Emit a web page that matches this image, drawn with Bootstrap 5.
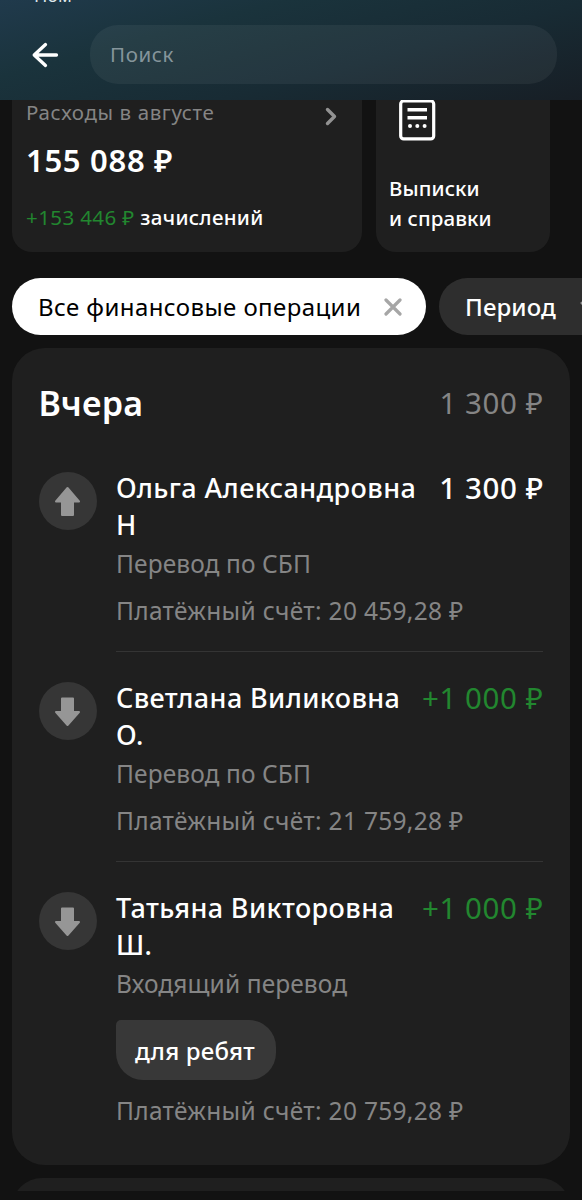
<!DOCTYPE html>
<html lang="ru" data-bs-theme="dark">
<head>
<meta charset="utf-8">
<meta name="viewport" content="width=device-width, initial-scale=1">
<title>История операций</title>
<link href="https://cdn.jsdelivr.net/npm/bootstrap@5.3.0/dist/css/bootstrap.min.css" rel="stylesheet">
<style>
  body { background: #121212; color: #fff; font-family: "Noto Sans", "Open Sans", sans-serif; height: 1200px; overflow: hidden; white-space: nowrap; }
  .screen { height: 1200px; overflow: hidden; }
  .inset { margin-left: 12px; }
  .topbar { height: 100px; padding: 25px 25px 0 31px; background: linear-gradient(165deg, #203a4c 0%, #1a333c 30%, #182b34 62%, #171e25 100%); position: relative; }
  .status-clip { position: absolute; left: 34px; top: -17px; font-size: 18px; line-height: 24px; color: #dfe6ea; }
  .search { height: 59px; border-radius: 28px; background: rgba(255,255,255,.055); color: #85959b; padding: 0 20px; font-size: 20.5px; line-height: 58px; margin-left: 31px; letter-spacing: .6px; }
  .panel { background: #1f1f1f; }
  .summary { height: 152px; border-radius: 0 0 20px 20px; }
  .spend { width: 350px; padding-left: 14px; }
  .docs { width: 174px; padding-left: 13px; margin-left: 14px; }
  .docs-icon { margin-left: 10px; }
  .docs-label { margin-top: 32px; letter-spacing: .1px; }
  .muted { color: #858585; }
  .gain { color: #22872f; }
  .cap-sm { font-size: 20.5px; line-height: 30px; font-weight: 500; }
  .spend-title { height: 30px; margin-top: -3px; font-weight: 400; letter-spacing: .6px; }
  .total { font-size: 31px; font-weight: 600; line-height: 40px; margin-top: 13px; letter-spacing: .7px; }
  .income { margin-top: 22px; letter-spacing: .3px; }
  .income .gain { font-weight: 400; letter-spacing: .4px; }
  .filters { margin-top: 26px; height: 57px; }
  .chip { height: 57px; border-radius: 29px; font-size: 24px; line-height: 57px; padding-left: 26px; }
  .chip-on { background: #fff; color: #000; width: 414px; padding-right: 24px; letter-spacing: .42px; }
  .chip-off { background: #2e2e2e; width: 143px; margin-left: 13px; border-radius: 29px 0 0 29px; font-weight: 500; letter-spacing: .1px; overflow: hidden; }
  .feed { margin-top: 13px; height: 817px; border-radius: 33px; width: 558px; padding: 0 27px 0 26.5px; }
  .day { height: 94px; padding-top: 31px; line-height: 48px; }
  .day-name { font-size: 34px; font-weight: 600; letter-spacing: .3px; }
  .sum { font-size: 29.5px; letter-spacing: .6px; margin-right: -.6px; }
  .op { height: 210px; padding-top: 27px; }
  .op-icon { width: 58px; height: 58px; border-radius: 50%; background: #363636; margin: 3px 19.5px 0 0; }
  .op-body { height: 183px; width: 427px; }
  .op-line { border-bottom: 1px solid #343434; }
  .who { font-size: 27px; line-height: 37px; font-weight: 500; letter-spacing: .4px; }
  .op .sum { line-height: 38px; }
  .sum-out { font-weight: 500; }
  .info { font-size: 24.5px; line-height: 32px; margin-top: 5px; letter-spacing: .1px; }
  .acct { font-size: 24.5px; line-height: 32px; margin-top: 15px; letter-spacing: .3px; }
  .bubble { margin-top: 20px; height: 60px; width: 160px; border-radius: 5px 27px 27px 27px; background: #383838; font-size: 24px; line-height: 61px; padding-left: 19px; font-weight: 500; letter-spacing: .2px; }
  .next { margin-top: 13px; height: 13px; width: 558px; overflow: hidden; }
  .next > div { height: 60px; border-radius: 33px; }
</style>
</head>
<body>
<div class="screen d-flex flex-column">
  <header class="topbar d-flex align-items-start flex-shrink-0">
    <div class="status-clip">Ном</div>
    <svg class="flex-shrink-0" width="28" height="59" viewBox="0 0 28 59" fill="none" stroke="#fff" stroke-width="3.3" stroke-linecap="round" stroke-linejoin="round"><path d="M14.500 19.500 3.200 30 14.500 40.500M3.200 30H25.500"/></svg>
    <div class="search flex-grow-1">Поиск</div>
  </header>

  <section class="d-flex flex-shrink-0 inset">
    <div class="summary panel spend">
      <div class="d-flex justify-content-between cap-sm spend-title muted">
        <span>Расходы в августе</span>
        <svg class="me-4" width="14" height="38" viewBox="0 0 14 38" fill="none" stroke="#929292" stroke-width="3.4" stroke-linecap="round" stroke-linejoin="round"><path d="M3.500 12.500 10.500 19.500 3.500 26.500"/></svg>
      </div>
      <div class="total">155 088 ₽</div>
      <div class="cap-sm income"><span class="gain">+153 446 ₽</span> зачислений</div>
    </div>
    <div class="summary panel docs">
      <svg class="d-block docs-icon" width="38" height="41" viewBox="0 0 38 41" fill="none" stroke="#fff"><rect x="1.700" y=".9" width="33" height="38" rx="3" stroke-width="3.200"/><path d="M8.500 9.700h19.500M8.500 17.700h19.500" stroke-width="3.400"/><g fill="#fff" stroke="none"><circle cx="11" cy="26" r="2"/><circle cx="18.300" cy="26" r="2"/><circle cx="25.600" cy="26" r="2"/></g></svg>
      <div class="cap-sm docs-label">Выписки<br>и справки</div>
    </div>
  </section>

  <section class="filters d-flex flex-shrink-0 inset">
    <div class="chip chip-on d-flex align-items-center flex-shrink-0">
      <span>Все финансовые операции</span>
      <svg class="ms-auto" width="18" height="18" viewBox="0 0 18 18" stroke="#a6a6a6" stroke-width="3.2" stroke-linecap="round"><path d="M2 2 16 16M16 2 2 16"/></svg>
    </div>
    <div class="chip chip-off d-flex align-items-center flex-shrink-0">
      <span>Период</span>
      <svg class="flex-shrink-0 ms-4" width="18" height="12" viewBox="0 0 18 12" fill="none" stroke="#929292" stroke-width="3" stroke-linecap="round" stroke-linejoin="round"><path d="M2 2 9 9 16 2"/></svg>
    </div>
  </section>

  <main class="feed panel flex-shrink-0 inset">
    <div class="day d-flex justify-content-between">
      <span class="day-name">Вчера</span><span class="sum muted">1 300 ₽</span>
    </div>
    <div class="op d-flex">
      <div class="op-icon d-flex align-items-center justify-content-center flex-shrink-0">
        <svg width="27" height="31" viewBox="0 0 27 31" fill="#969696" stroke="#969696" stroke-width="2" stroke-linejoin="round"><path d="M13.500 2 25 15.500H19V29H8V15.500H2Z"/></svg>
      </div>
      <div class="op-body op-line">
        <div class="d-flex justify-content-between"><div class="who">Ольга Александровна<br>Н</div><div class="sum sum-out">1 300 ₽</div></div>
        <div class="info muted">Перевод по СБП</div>
        <div class="acct muted">Платёжный счёт: 20 459,28 ₽</div>
      </div>
    </div>
    <div class="op d-flex">
      <div class="op-icon d-flex align-items-center justify-content-center flex-shrink-0">
        <svg width="27" height="31" viewBox="0 0 27 31" fill="#969696" stroke="#969696" stroke-width="2" stroke-linejoin="round"><path d="M13.500 29 25 16H19V2.500H8V16H2Z"/></svg>
      </div>
      <div class="op-body op-line">
        <div class="d-flex justify-content-between"><div class="who">Светлана Виликовна<br>О.</div><div class="sum gain">+1 000 ₽</div></div>
        <div class="info muted">Перевод по СБП</div>
        <div class="acct muted">Платёжный счёт: 21 759,28 ₽</div>
      </div>
    </div>
    <div class="op d-flex">
      <div class="op-icon d-flex align-items-center justify-content-center flex-shrink-0">
        <svg width="27" height="31" viewBox="0 0 27 31" fill="#969696" stroke="#969696" stroke-width="2" stroke-linejoin="round"><path d="M13.500 29 25 16H19V2.500H8V16H2Z"/></svg>
      </div>
      <div class="op-body">
        <div class="d-flex justify-content-between"><div class="who">Татьяна Викторовна<br>Ш.</div><div class="sum gain">+1 000 ₽</div></div>
        <div class="info muted">Входящий перевод</div>
        <div class="bubble">для ребят</div>
        <div class="acct muted">Платёжный счёт: 20 759,28 ₽</div>
      </div>
    </div>
  </main>
  <div class="next flex-shrink-0 inset"><div class="panel"></div></div>
</div>
<script src="https://cdn.jsdelivr.net/npm/bootstrap@5.3.0/dist/js/bootstrap.bundle.min.js"></script>
</body>
</html>
